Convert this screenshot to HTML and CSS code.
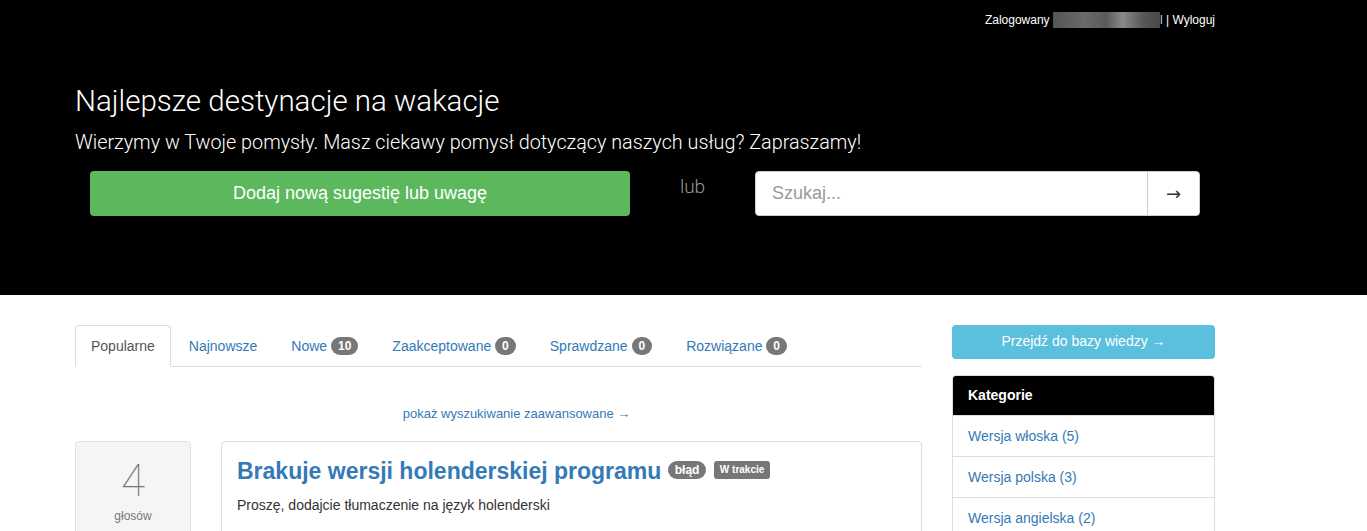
FILE: index.html
```html
<!DOCTYPE html>
<html lang="pl">
<head>
<meta charset="utf-8">
<title>Najlepsze destynacje na wakacje</title>
<link rel="stylesheet" href="styles.css">
</head>
<body>
<header class="hero">
  <div class="container">
    <div class="userbar">Zalogowany <span class="blurname"></span><span class="nm">l</span> | <a href="#">Wyloguj</a></div>
    <h1 class="hero-title">Najlepsze destynacje na wakacje</h1>
    <p class="hero-lead">Wierzymy w Twoje pomysły. Masz ciekawy pomysł dotyczący naszych usług? Zapraszamy!</p>
    <div class="actions">
      <a class="btn-add" href="#">Dodaj nową sugestię lub uwagę</a>
      <div class="or">lub</div>
      <form class="search">
        <input class="search-input" type="text" placeholder="Szukaj...">
        <button class="search-btn" type="button">→</button>
      </form>
    </div>
  </div>
</header>
<main class="container main">
  <section class="col-main">
    <ul class="tabs">
      <li class="tab active"><a href="#">Popularne</a></li>
      <li class="tab"><a href="#">Najnowsze</a></li>
      <li class="tab"><a href="#">Nowe <span class="badge">10</span></a></li>
      <li class="tab"><a href="#">Zaakceptowane <span class="badge">0</span></a></li>
      <li class="tab"><a href="#">Sprawdzane <span class="badge">0</span></a></li>
      <li class="tab"><a href="#">Rozwiązane <span class="badge">0</span></a></li>
    </ul>
    <div class="adv"><a href="#">pokaż wyszukiwanie zaawansowane →</a></div>
    <div class="idea">
      <div class="votes">
        <div class="vote-num">4</div>
        <div class="vote-lbl">głosów</div>
      </div>
      <div class="idea-card">
        <h3 class="idea-title"><a href="#">Brakuje wersji holenderskiej programu</a> <span class="badge badge-lg">błąd</span> <span class="label">W trakcie</span></h3>
        <p class="idea-desc">Proszę, dodajcie tłumaczenie na język holenderski</p>
      </div>
    </div>
  </section>
  <aside class="col-side">
    <a class="btn-kb" href="#">Przejdź do bazy wiedzy →</a>
    <div class="panel">
      <div class="panel-head">Kategorie</div>
      <a class="panel-item" href="#">Wersja włoska (5)</a>
      <a class="panel-item" href="#">Wersja polska (3)</a>
      <a class="panel-item" href="#">Wersja angielska (2)</a>
    </div>
  </aside>
</main>
</body>
</html>
```
FILE: styles.css
```css
* { box-sizing: border-box; }
html, body { margin: 0; padding: 0; }
body {
  font-family: "Liberation Sans", Arial, sans-serif;
  font-size: 14px;
  line-height: 20px;
  color: #333;
  background: #fff;
}
a { color: #337ab7; text-decoration: none; }

.container {
  width: 1170px;
  margin-left: 60px;
  padding: 0 15px;
}

.hero {
  background: #000;
  color: #fff;
  height: 295px;
}
.userbar {
  display: flex;
  justify-content: flex-end;
  align-items: center;
  padding-top: 10px;
  font-size: 12px;
  line-height: 20px;
  white-space: pre;
}
.userbar a { color: #fff; }
.blurname {
  display: inline-block;
  width: 107px;
  height: 16px;
  background: linear-gradient(90deg, #555 0%, #6a6a6a 30%, #5a5a5a 50%, #8a8a8a 65%, #555 85%, #4a4a4a 100%);
  filter: blur(0.6px);
}
.nm { color: #ccc; }

.hero-title {
  margin: 51px 0 0;
  font-family: Roboto, "Liberation Sans", sans-serif;
  font-weight: 300;
  font-size: 29.5px;
  line-height: 40px;
}
.hero-lead {
  margin: 8px 0 0;
  font-family: Roboto, "Liberation Sans", sans-serif;
  font-weight: 300;
  font-size: 19.8px;
  line-height: 28px;
}
.actions {
  display: flex;
  align-items: flex-start;
  margin-top: 14px;
  padding-left: 15px;
}
.btn-add {
  display: block;
  width: 540px;
  height: 45px;
  line-height: 45px;
  background: #5cb85c;
  color: #fff;
  text-align: center;
  font-size: 18px;
  border-radius: 4px;
}
.or {
  width: 125px;
  text-align: center;
  color: #999;
  font-family: Roboto, "Liberation Sans", sans-serif;
  font-weight: 300;
  font-size: 19px;
  line-height: 30px;
  padding-top: 1px;
}
.search {
  display: flex;
  width: 445px;
  height: 45px;
  margin: 0;
  border-radius: 4px;
  background: #fff;
  border: 1px solid #ccc;
  overflow: hidden;
}
.search-input {
  flex: 1;
  border: 0;
  outline: 0;
  padding: 0 16px;
  font-family: "Liberation Sans", Arial, sans-serif;
  font-size: 18px;
  color: #555;
  background: #fff;
}
.search-input::placeholder { color: #999; }
.search-btn {
  width: 52px;
  border: 0;
  border-left: 1px solid #ccc;
  background: #fff;
  color: #333;
  font-size: 18px;
  font-family: "DejaVu Sans", sans-serif;
  padding: 0;
}

.main {
  display: flex;
  padding-top: 30px;
}
.col-main { width: 847px; }
.col-side { width: 263px; margin-left: 30px; }

.tabs {
  list-style: none;
  margin: 0;
  padding: 0;
  display: flex;
  border-bottom: 1px solid #ddd;
}
.tab { margin-right: 2px; margin-bottom: -1px; }
.tab a {
  display: block;
  padding: 10px 15px;
  line-height: 20px;
  border: 1px solid transparent;
  border-radius: 4px 4px 0 0;
}
.tab.active a {
  color: #555;
  background: #fff;
  border-color: #ddd #ddd transparent;
}
.badge {
  display: inline-block;
  min-width: 10px;
  padding: 3px 7px;
  font-size: 12px;
  font-weight: bold;
  line-height: 1;
  color: #fff;
  background: #777;
  border-radius: 10px;
  text-align: center;
  vertical-align: middle;
  position: relative;
  top: -1px;
}
.adv {
  text-align: center;
  padding-left: 36px;
  margin-top: 37px;
  font-size: 13px;
  line-height: 20px;
}

.idea {
  display: flex;
  margin-top: 17px;
}
.votes {
  width: 116px;
  height: 100px;
  background: #f5f5f5;
  border: 1px solid #e3e3e3;
  border-radius: 4px;
  text-align: center;
  padding-top: 17px;
}
.vote-num {
  font-family: Roboto, "Liberation Sans", sans-serif;
  font-weight: 100;
  font-size: 44px;
  line-height: 44px;
  color: #777;
}
.vote-lbl {
  margin-top: 3px;
  font-size: 12px;
  color: #777;
}
.idea-card {
  margin-left: 30px;
  width: 701px;
  height: 100px;
  border: 1px solid #ddd;
  border-radius: 4px;
  padding: 14px 15px;
}
.idea-title {
  margin: 0;
  font-size: 23px;
  line-height: 30px;
  font-weight: bold;
}
.badge-lg {
  font-size: 12px;
  padding: 3px 7px;
  top: -3px;
}
.label {
  display: inline-block;
  padding: 4px 6px 4px;
  font-size: 10px;
  font-weight: bold;
  line-height: 1;
  color: #fff;
  background: #777;
  border-radius: 3px;
  vertical-align: middle;
  position: relative;
  top: -3px;
  margin-left: 1px;
}
.idea-desc {
  margin: 9px 0 0;
  font-size: 14px;
}

.btn-kb {
  display: block;
  height: 34px;
  line-height: 32px;
  background: #5bc0de;
  color: #fff;
  text-align: center;
  border-radius: 4px;
  font-size: 14px;
}
.panel {
  margin-top: 16px;
  border: 1px solid #ddd;
  border-radius: 4px;
  overflow: hidden;
}
.panel-head {
  background: #000;
  color: #fff;
  font-weight: bold;
  padding: 9px 15px 10px;
  height: 39px;
}
.panel-item {
  display: block;
  padding: 10px 15px;
  border-top: 1px solid #ddd;
  height: 41px;
}
```
